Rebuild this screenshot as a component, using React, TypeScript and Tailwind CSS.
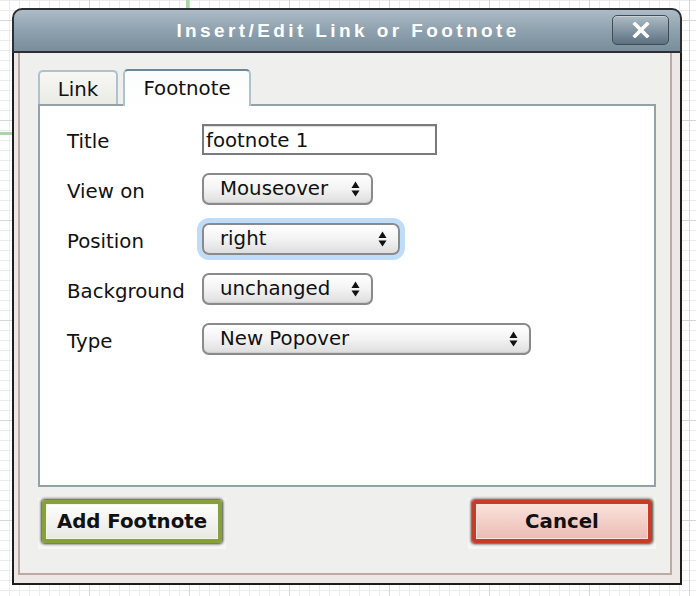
import React from "react";

function Arrows() {
  return (
    <svg width="9" height="16" viewBox="0 0 9 16" className="shrink-0">
      <polygon points="0.5,7 4.5,0.5 8.5,7" fill="#111" />
      <polygon points="0.5,9.5 8.5,9.5 4.5,15.5" fill="#111" />
    </svg>
  );
}

function Select({ value, w, focus }: { value: string; w: string; focus?: boolean }) {
  return (
    <div
      className={`${w} h-[32px] mb-[4px] rounded-[7px] border-2 border-[#8a8a8a] bg-gradient-to-b from-[#ffffff] via-[#f3f3f3] to-[#dedede] flex items-center justify-between pl-[16px] pr-[11px] ${
        focus ? "shadow-[0_0_0_5px_#bfdcf9]" : "shadow-[inset_0_-1px_1px_rgba(0,0,0,0.08)]"
      }`}
    >
      <span className="leading-none">{value}</span>
      <Arrows />
    </div>
  );
}

function Row({ label, children }: { label: string; children: React.ReactNode }) {
  return (
    <div className="h-[50px] flex items-center">
      <div className="w-[135px] leading-none pt-[2px]">{label}</div>
      {children}
    </div>
  );
}

export default function App() {
  return (
    <div className="w-[696px] h-[596px] overflow-hidden bg-white pl-[12px] pt-[8px] font-['DejaVu_Sans',sans-serif] text-[19.75px] text-[#111] [background-image:linear-gradient(#a9d6a9,#a9d6a9),linear-gradient(#a9d6a9,#a9d6a9),linear-gradient(to_right,#d6d6d6_1px,transparent_1px),linear-gradient(to_bottom,#d6d6d6_1px,transparent_1px),linear-gradient(to_right,#ececec_1px,transparent_1px),linear-gradient(to_bottom,#ececec_1px,transparent_1px)] [background-size:3px_100px,100px_3px,100px_100px,100px_100px,10px_10px,10px_10px] [background-position:186px_0,0_132px,89px_0,0_20px,9px_0,0_0] [background-repeat:no-repeat,no-repeat,repeat,repeat,repeat,repeat]">
      <div className="w-[670px] h-[577px] flex flex-col">
        {/* Title bar */}
        <div className="h-[45px] shrink-0 rounded-t-[10px] border-2 border-[#2b2f33] bg-gradient-to-b from-[#adbcc6] via-[#8ea1ae] to-[#7a8d9a] flex items-center">
          <div className="flex-1 pl-[70px] text-center font-['Liberation_Sans',sans-serif] font-bold text-[19px] tracking-[3.4px] text-white leading-none">
            Insert/Edit Link or Footnote
          </div>
          <div className="w-[57px] h-[30px] mr-[11px] mt-[-1px] rounded-[5px] border border-[#3f4d57] bg-gradient-to-b from-[#aebbc4] via-[#8597a4] to-[#5d7080] shadow-[inset_0_1px_0_rgba(255,255,255,0.35)] flex items-center justify-center">
            <svg width="18" height="16" viewBox="0 0 18 16">
              <path d="M3 2 L15 14 M15 2 L3 14" stroke="#fff" strokeWidth="3.6" strokeLinecap="square" />
            </svg>
          </div>
        </div>

        {/* Body */}
        <div className="flex-1 flex bg-[#ede8e5] border-x-2 border-b-2 border-[#1c1c1c] pl-[4px] pr-[8px] pb-[8px]">
          <div className="flex-1 flex flex-col bg-[#efefed] border-x-2 border-b-2 border-[#bdaba3] pl-[18px] pt-[16px]">
            {/* Tabs */}
            <div className="flex items-end gap-[5px] -mb-[2px] relative z-10">
              <div className="w-[80px] h-[34px] mb-[2px] rounded-t-[5px] border-2 border-b-0 border-[#afc2cc] bg-gradient-to-b from-[#f7f7f4] to-[#ebebe6] flex items-center justify-center leading-none pt-[3px]">
                Link
              </div>
              <div className="w-[128px] h-[37px] rounded-t-[5px] border-2 border-b-0 border-[#afc2cc] border-t-[#6d8798] bg-gradient-to-b from-[#fbfcfd] to-white flex items-center justify-center leading-none pt-[1px]">
                Footnote
              </div>
            </div>

            {/* Panel */}
            <div className="w-[618px] h-[383px] border-2 border-[#92a2a8] bg-white pl-[27px] pt-[10px]">
              <Row label="Title">
                <div className="w-[235px] h-[31px] mb-[3px] border-2 border-[#7b7b7b] shadow-[inset_0_1px_1px_rgba(0,0,0,0.15)] pl-[2px] pt-[2px] flex items-center leading-none">
                  footnote 1
                </div>
              </Row>
              <Row label="View on">
                <Select value="Mouseover" w="w-[171px]" />
              </Row>
              <Row label="Position">
                <Select value="right" w="w-[198px]" focus />
              </Row>
              <Row label="Background">
                <Select value="unchanged" w="w-[171px]" />
              </Row>
              <Row label="Type">
                <Select value="New Popover" w="w-[329px]" />
              </Row>
            </div>

            {/* Buttons */}
            <div className="w-[618px] flex justify-between mt-[11px]">
              <div className="bg-[#f7f7f5] px-[4px] pt-[2px] pb-[6px]">
                <div className="w-[180px] h-[43px] rounded-[3px] border-[4px] border-[#86a03a] bg-gradient-to-b from-[#fefefc] to-[#e8e8e3] shadow-[inset_0_0_0_1px_#f4f6ea,0_0_3px_1px_rgba(20,20,20,0.85)] flex items-center justify-center font-bold leading-none">
                  Add Footnote
                </div>
              </div>
              <div className="bg-[#f7f7f5] px-[4px] pt-[2px] pb-[6px]">
                <div className="w-[180px] h-[43px] rounded-[3px] border-[4px] border-[#c63c28] bg-gradient-to-b from-[#fae2dc] to-[#ebbcb3] shadow-[inset_0_0_0_1px_#f9e4df,0_0_3px_1px_rgba(20,20,20,0.85)] flex items-center justify-center font-bold leading-none">
                  Cancel
                </div>
              </div>
            </div>
          </div>
        </div>
      </div>
    </div>
  );
}
